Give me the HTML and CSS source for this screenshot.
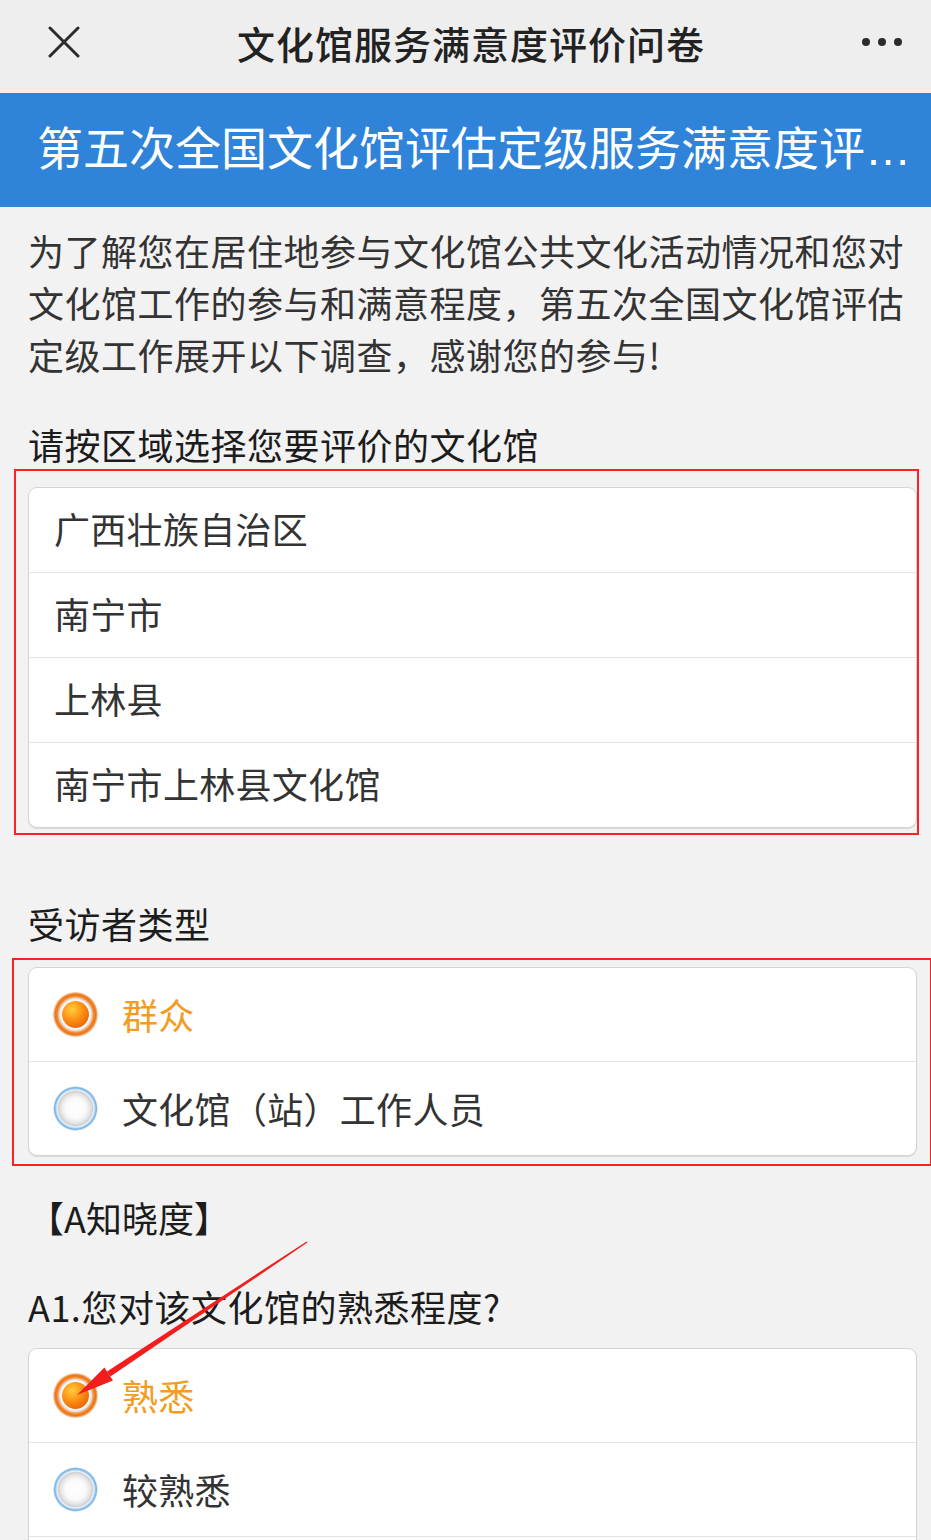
FILE: index.html
```html
<!DOCTYPE html>
<html>
<head>
    <meta charset="utf-8">
    <title>文化馆服务满意度评价问卷</title>
    <link rel="stylesheet" href="styles.css">
</head>
<body>
    <div class="topbar">
        <svg class="close" width="32" height="32" viewBox="0 0 32 32">
            <path d="M2 2 L30 30 M30 2 L2 30" stroke="#2b2b2b" stroke-width="3" stroke-linecap="round"/>
        </svg>
        <div class="topbar-title">文化馆服务满意度评价问卷</div>
        <div class="more"><span></span><span></span><span></span></div>
    </div>

    <div class="banner">第五次全国文化馆评估定级服务满意度评价问卷</div>

    <div class="content">
        <p class="intro">为了解您在居住地参与文化馆公共文化活动情况和您对文化馆工作的参与和满意程度，第五次全国文化馆评估定级工作展开以下调查，感谢您的参与!</p>

        <div class="q-title first">请按区域选择您要评价的文化馆</div>
        <div class="options">
            <div class="mark mark-region"></div>
            <div class="option">广西壮族自治区</div>
            <div class="option">南宁市</div>
            <div class="option">上林县</div>
            <div class="option">南宁市上林县文化馆</div>
        </div>

        <div class="q-title gap-lg">受访者类型</div>
        <div class="options">
            <div class="mark mark-type"></div>
            <div class="option choice selected"><span class="radio on"></span>群众</div>
            <div class="option choice"><span class="radio off"></span>文化馆（站）工作人员</div>
        </div>

        <div class="section-title">【A知晓度】</div>

        <div class="q-title">A1.您对该文化馆的熟悉程度?</div>
        <div class="options">
            <div class="option choice selected"><span class="radio on"></span>熟悉</div>
            <div class="option choice"><span class="radio off"></span>较熟悉</div>
            <div class="option choice"><span class="radio off"></span>一般</div>
            <div class="option choice"><span class="radio off"></span>不太熟悉</div>
            <div class="option choice"><span class="radio off"></span>不熟悉</div>
        </div>
    </div>

    <!-- red arrow drawn over the page -->
    <svg class="arrow" width="931" height="1540" viewBox="0 0 931 1540">
        <polygon points="306.6,1241.4 307.4,1242.6 110.4,1376.5 107,1371.5" fill="#f21d1d"/>
        <polygon points="77,1395 113,1380.5 104.4,1367.5" fill="#f21d1d"/>
    </svg>
</body>
</html>
```

FILE: styles.css
```css
html, body { overflow-x: hidden; }
body {
    margin: 0;
    position: relative;
    background: #f2f2f2;
    font-family: "Noto Sans CJK SC", "Noto Sans", sans-serif;
    color: #333;
}
.topbar {
    height: 84px;
    padding: 0 29px 9px 48px;
    background: #eeeeee;
    display: flex;
    align-items: center;
}
.close { flex: none; }
.topbar-title {
    flex: 1;
    text-align: center;
    font-size: 38px;
    font-weight: 500;
    color: #222;
    letter-spacing: 1px;
}
.more { display: flex; gap: 8px; }
.more span {
    width: 8px;
    height: 8px;
    border-radius: 50%;
    background: #2b2b2b;
}
.banner {
    height: 114px;
    line-height: 112px;
    background: #2f83d9;
    color: #fff;
    font-family: "Liberation Sans", "Noto Sans CJK SC", sans-serif;
    font-size: 46px;
    padding: 0 18px 0 37px;
    white-space: nowrap;
    overflow: hidden;
    text-overflow: ellipsis;
}
.content { padding: 0 14px 40px 28px; }
.intro {
    margin: 17px 0 0;
    font-size: 36px;
    line-height: 52px;
    letter-spacing: 0.5px;
    color: #333;
}
.q-title {
    font-size: 36px;
    line-height: 52px;
    letter-spacing: 0.5px;
    color: #1c1c1c;
    margin: 37px 0 16px;
}
.q-title.first { margin-top: 38px; margin-bottom: 17px; }
.q-title.gap-lg { margin-top: 69px; margin-bottom: 18px; }
.section-title {
    font-size: 36px;
    line-height: 52px;
    color: #1c1c1c;
    margin-top: 35px;
}
.options {
    position: relative;
    background: #fff;
    border: 1px solid #d4d4d4;
    border-radius: 9px;
    box-shadow: 0 1px 1px rgba(0, 0, 0, 0.1);
}
.option {
    display: flex;
    align-items: center;
    padding: 14px 25px 18px;
    font-size: 36px;
    line-height: 52px;
    letter-spacing: 0.3px;
    color: #333;
}
.option + .option { border-top: 1px solid #e4e4e4; }
.option.choice { padding: 20px 24px 21px; gap: 24px; }
.option.selected { color: #f39c1f; }
.radio {
    flex: none;
    width: 45px;
    height: 45px;
    border-radius: 50%;
    position: relative;
}
.radio.off {
    background: radial-gradient(circle closest-side, #fff 0, #fafafa 45%, #e4e4e4 66%, #d0d0d0 76%, #eef4fa 82%, #a4cdef 87%, #76b4e6 93%, rgba(118, 180, 230, 0) 100%);
}
.radio.on {
    background: radial-gradient(circle closest-side, #fff 0, #fff 60%, #dfeaf4 70%, #f6b27a 76%, #f08428 82%, #ec7518 90%, rgba(240, 130, 40, 0.3) 100%);
}
.radio.on::after {
    content: "";
    position: absolute;
    inset: 9px;
    border-radius: 50%;
    background: radial-gradient(circle at 38% 32%, #ffcf3a 0, #ff9a1a 35%, #f27409 65%, #e35a00 100%);
}
.mark {
    position: absolute;
    border: 2px solid #ff2121;
    pointer-events: none;
}
.mark-region { top: -19px; left: -15px; right: -3px; bottom: -8px; }
.mark-type { top: -10px; left: -17px; right: -16px; bottom: -11px; }
.arrow {
    position: absolute;
    top: 0;
    left: 0;
    pointer-events: none;
}
```
